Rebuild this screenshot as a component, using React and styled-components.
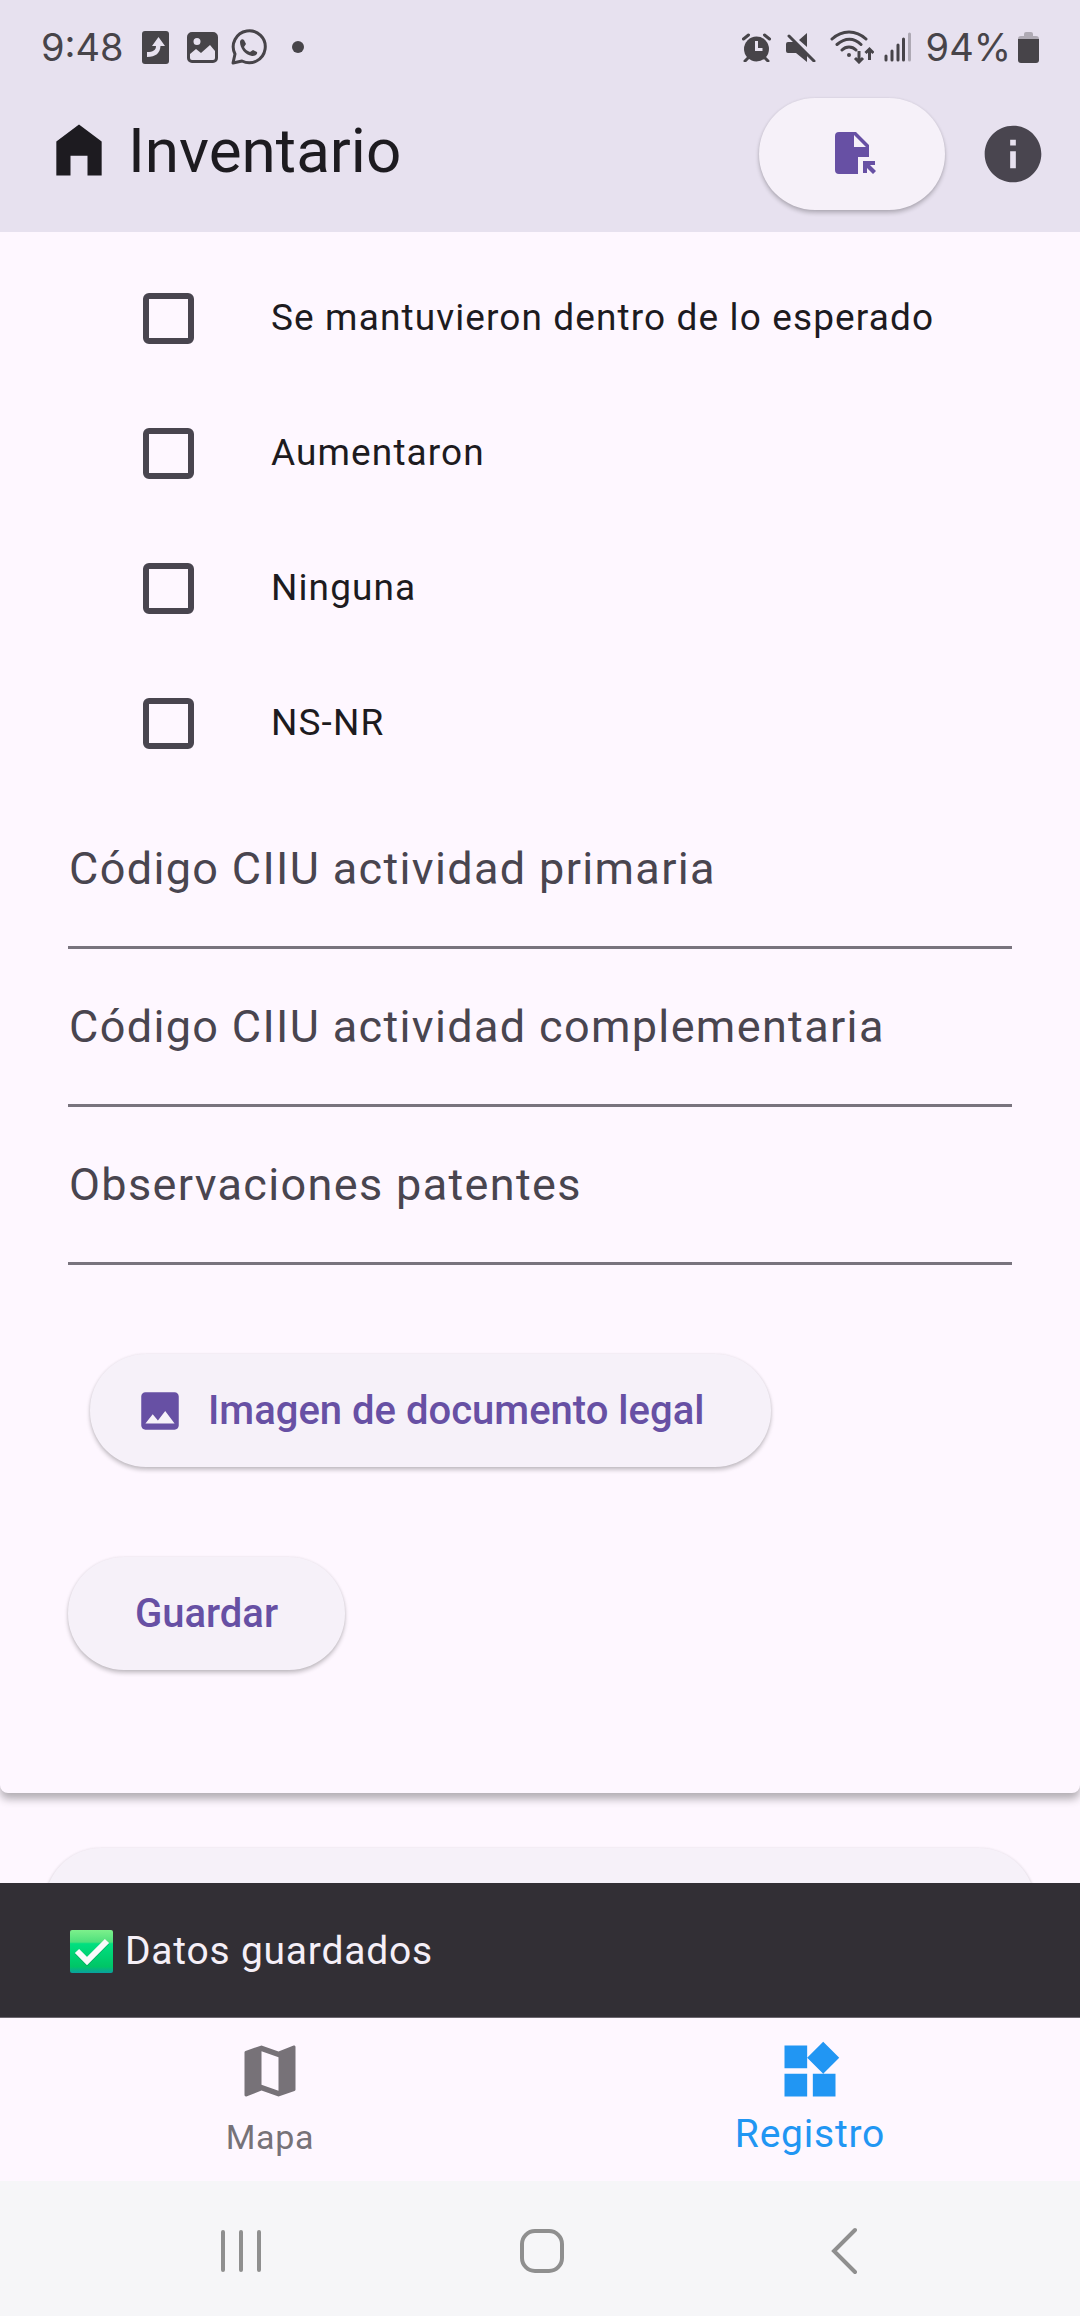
import React from "react";
import styled, { createGlobalStyle } from "styled-components";

const color = {
  surface: "#fef7ff",
  header: "#e7e1ef",
  raised: "#f6f1f9",
  primary: "#6750a4",
  ink: "#1d1b20",
  muted: "#49454f",
  outline: "#79747e",
  status: "#474449",
  snackbar: "#322f35",
  onSnackbar: "#f5eff7",
  idle: "#777278",
  active: "#2196f3",
  system: "#f6f6f8",
  systemIcon: "#8f8f8f",
};

const GlobalStyle = createGlobalStyle`
  *, *::before, *::after { box-sizing: border-box; }
  body {
    margin: 0;
    background: ${color.surface};
    color: ${color.ink};
    font-family: Roboto, "Noto Sans", sans-serif;
  }
  svg { display: block; flex: none; }
  button, input { font: inherit; color: inherit; }
`;

const Screen = styled.div`
  display: flex;
  flex-direction: column;
  height: 100vh;
  overflow: hidden;
`;

const Header = styled.header`
  background: ${color.header};
`;

const StatusBar = styled.div`
  display: flex;
  align-items: center;
  justify-content: space-between;
  height: 94px;
  padding: 0 41px;
  color: ${color.status};
  font-family: Inter, Roboto, sans-serif;
  font-size: 38px;
  line-height: 48px;
  font-weight: 400;
`;

const StatusGroup = styled.div`
  display: flex;
  align-items: center;
  gap: ${(p) => p.$gap}px;
`;

const AppBar = styled.div`
  display: flex;
  align-items: center;
  justify-content: space-between;
  padding: 4px 33px 22px 45px;
`;

const Brand = styled.div`
  display: flex;
  align-items: center;
  gap: 15px;
  padding-bottom: 8px;
`;

const Title = styled.h1`
  margin: 0;
  padding-top: 2px;
  font-size: 62px;
  line-height: 80px;
  font-weight: 400;
`;

const IconButton = styled.button`
  display: flex;
  padding: 0;
  border: 0;
  background: none;
  color: ${color.muted};
`;

const PillButton = styled.button`
  display: flex;
  align-items: center;
  justify-content: center;
  gap: 23px;
  height: ${(p) => p.$height || 113}px;
  padding: ${(p) => p.$padding || "0 67px"};
  border: 0;
  border-radius: 56px;
  background: ${color.raised};
  color: ${color.primary};
  font-size: 40px;
  line-height: 56px;
  font-weight: 500;
  box-shadow: 0 3px 4px rgba(0, 0, 0, 0.22), 0 0 3px rgba(0, 0, 0, 0.08);
`;

const Actions = styled.div`
  display: flex;
  align-items: center;
  gap: 34px;
`;

const Content = styled.main`
  flex: 1;
  min-height: 0;
  overflow: hidden;
`;

const Card = styled.form`
  display: flex;
  flex-direction: column;
  padding: 19px 68px 123px;
  border-radius: 0 0 8px 8px;
  background: ${color.surface};
  box-shadow: 0 6px 9px rgba(0, 0, 0, 0.3);
`;

const Options = styled.fieldset`
  margin: 0;
  padding: 0;
  border: 0;
`;

const Option = styled.label`
  display: flex;
  align-items: center;
  gap: 77px;
  height: 135px;
  padding-left: 75px;
  font-size: 37px;
  line-height: 52px;
  letter-spacing: 0.03em;
`;

const OptionText = styled.span`
  padding-bottom: 2px;
`;

const Checkbox = styled.input`
  appearance: none;
  flex: none;
  width: 51px;
  height: 51px;
  margin: 0;
  border: 6px solid ${color.muted};
  border-radius: 6px;
  &:checked { background: ${color.primary}; border-color: ${color.primary}; }
`;

const Field = styled.input`
  width: 100%;
  height: 158px;
  padding: 0 1px;
  border: 0;
  border-bottom: 3px solid ${color.outline};
  border-radius: 0;
  background: transparent;
  outline: none;
  font-size: 45px;
  line-height: 68px;
  letter-spacing: 0.03em;
  &::placeholder { color: ${color.muted}; opacity: 1; }
`;

const FormActions = styled.div`
  display: flex;
  flex-direction: column;
  align-items: flex-start;
  gap: 90px;
  padding-top: 89px;
`;

const Indent = styled.div`
  padding-left: 22px;
`;

const NextSection = styled.div`
  display: grid;
  padding: 55px 45px 0;
`;

const Snackbar = styled.div`
  display: flex;
  align-items: center;
  gap: 12px;
  height: 135px;
  padding: 2px 70px 0;
  border-bottom: 1px solid #6b666e;
  background: ${color.snackbar};
  color: ${color.onSnackbar};
  font-size: 39px;
  line-height: 56px;
  letter-spacing: 0.02em;
`;

const BottomNav = styled.nav`
  display: grid;
  grid-template-columns: 1fr 1fr;
  height: 163px;
`;

const NavItem = styled.a`
  display: flex;
  flex-direction: column;
  align-items: center;
  gap: 2px;
  padding-top: 19px;
  color: ${(p) => (p.$active ? color.active : color.idle)};
  font-size: ${(p) => (p.$active ? 39 : 34)}px;
  line-height: ${(p) => (p.$active ? 54 : 60)}px;
  letter-spacing: 0.02em;
  text-decoration: none;
`;

const SystemBar = styled.div`
  display: grid;
  grid-template-columns: 1fr 1fr 1fr;
  align-items: center;
  height: 135px;
  padding: 4px 86px 0 90px;
  background: ${color.system};
`;

const SystemButton = styled(IconButton)`
  justify-content: center;
  color: ${color.systemIcon};
`;

const Svg = ({ w, h = w, box, children }) => (
  <svg width={w} height={h} viewBox={box || `0 0 ${w} ${h}`} fill="currentColor" aria-hidden="true">
    {children}
  </svg>
);

const Material = ({ size, d }) => (
  <Svg w={size} box="0 0 24 24">
    <path d={d} />
  </Svg>
);

const paths = {
  home: "M4 21V9l8-6 8 6v12h-5v-7H9v7z",
  info: "M12 2C6.48 2 2 6.48 2 12s4.48 10 10 10 10-4.48 10-10S17.52 2 12 2zm1 15h-2v-6h2v6zm0-8h-2V7h2v2z",
  image:
    "M21 19V5c0-1.1-.9-2-2-2H5c-1.1 0-2 .9-2 2v14c0 1.1.9 2 2 2h14c1.1 0 2-.9 2-2zM8.5 13.5l2.5 3.01L14.5 12l4.5 6H5l3.5-4.5z",
  map: "M20.5 3l-.16.03L15 5.1 9 3 3.36 4.9c-.21.07-.36.25-.36.48V20.5c0 .28.22.5.5.5l.16-.03L9 18.9l6 2.1 5.64-1.9c.21-.07.36-.25.36-.48V3.5c0-.28-.22-.5-.5-.5zM15 19l-6-2.11V5l6 2.11V19z",
  widgets:
    "M13 13v8h8v-8h-8zM3 21h8v-8H3v8zM3 3v8h8V3H3zm13.66-1.31L11 7.34 16.66 13l5.66-5.66-5.66-5.65z",
};

const ShareIcon = () => (
  <Svg w={37} h={33} box="-5 0 37 33">
    <rect width="27" height="33" rx="3" />
    <path
      d="M5 21v5c9 0 13-4 13.500-11H23L16.500 6 10 15h4c0 4-3 6-9 6z"
      fill={color.header}
    />
  </Svg>
);

const GalleryIcon = () => (
  <Svg w={31}>
    <path
      fillRule="evenodd"
      d="M5 0h21a5 5 0 0 1 5 5v21a5 5 0 0 1-5 5H5a5 5 0 0 1-5-5V5a5 5 0 0 1 5-5zM10 6a3.500 3.500 0 1 0 0 7 3.500 3.500 0 0 0 0-7zM3 22v4a2 2 0 0 0 2 2h21a2 2 0 0 0 2-2v-7l-5-6-9 8-5-4z"
    />
  </Svg>
);

const ChatIcon = () => (
  <Svg w={36}>
    <path
      d="M4 25A16 16 0 1 1 11 32L2 34z"
      fill="none"
      stroke="currentColor"
      strokeWidth="3"
      strokeLinejoin="round"
    />
    <path d="M9 13c0-2 2-4 4-2l2 4-2 3c1 2 3 4 6 5l3-2 4 2c1 3-3 4-5 4C14 26 9 19 9 13z" />
  </Svg>
);

const DotIcon = () => (
  <Svg w={24} h={12}>
    <circle cx="18" cy="6" r="6" />
  </Svg>
);

const AlarmIcon = () => (
  <Svg w={34} h={29}>
    <circle cx="14.500" cy="16" r="12.500" />
    <path d="M1.500 6l5-4M27.500 6l-5-4M3 28l4-4M26 28l-4-4" stroke="currentColor" strokeWidth="3" strokeLinecap="round" />
    <path d="M14.500 8v8.500h6" fill="none" stroke={color.header} strokeWidth="3" />
  </Svg>
);

const MuteIcon = () => (
  <Svg w={34} h={29}>
    <path d="M13 7l8-7v14zM2 9h6l13 13v7L10 20H2a2 2 0 0 1-2-2v-7a2 2 0 0 1 2-2z" />
    <path d="M3 3l25 25" stroke="currentColor" strokeWidth="3" strokeLinecap="round" />
  </Svg>
);

const WifiIcon = () => (
  <Svg w={44} h={34}>
    <g fill="none" stroke="currentColor" strokeWidth="3" strokeLinecap="round">
      <path d="M2 9C12-.5 26-.5 36 9M7 14.500C15 7.500 24 7.500 31 14.500M12 20c4-4 10-4 14 0" />
    </g>
    <circle cx="19" cy="25" r="2" />
    <path d="M29 21v10M25 28l4 4 4-4M39.500 30V19M35.500 23l4-4 4 4" fill="none" stroke="currentColor" strokeWidth="3" />
  </Svg>
);

const SignalIcon = () => (
  <Svg w={32} h={30}>
    <g stroke="currentColor" strokeWidth="3" strokeLinecap="round">
      <path d="M2 24v4M8 19v9M14 13v15M19.500 7v21" />
      <path d="M25.500 2v26" opacity="0.35" />
    </g>
  </Svg>
);

const BatteryIcon = () => (
  <Svg w={21} h={31}>
    <path d="M6 2a2 2 0 0 1 2-2h5a2 2 0 0 1 2 2v2h3a3 3 0 0 1 3 3H0a3 3 0 0 1 3-3h3z" opacity="0.35" />
    <path d="M0 7h21v21a3 3 0 0 1-3 3H3a3 3 0 0 1-3-3z" />
  </Svg>
);

const FileImportIcon = () => (
  <Svg w={42} h={44}>
    <path fillRule="evenodd" d="M4 0h17l13 13v12H23v17H4a4 4 0 0 1-4-4V4a4 4 0 0 1 4-4zM19 3v12h12z" />
    <path d="M28 29h12v4h-5l6 6-3 3-6-6v5h-4z" />
  </Svg>
);

const CheckMark = () => (
  <Svg w={43}>
    <defs>
      <linearGradient id="check-tile" x1="0" y1="0" x2="0" y2="1">
        <stop offset="0" stopColor="#7df08c" />
        <stop offset="0.28" stopColor="#4fe07c" />
        <stop offset="0.32" stopColor="#00e080" />
        <stop offset="0.85" stopColor="#00c566" />
        <stop offset="1" stopColor="#0aa0a0" />
      </linearGradient>
    </defs>
    <rect width="43" height="43" rx="2" fill="url(#check-tile)" />
    <path d="M7 22l10 10 20-20" fill="none" stroke="#078a4c" strokeOpacity="0.5" strokeWidth="6" />
    <path d="M7 21l10 10 20-20" fill="none" stroke="#fafafa" strokeWidth="6" />
  </Svg>
);

const RecentsIcon = () => (
  <Svg w={42} h={46}>
    <path d="M3 4v38M21 4v38M39 4v38" stroke="currentColor" strokeWidth="4" strokeLinecap="round" />
  </Svg>
);

const SystemHomeIcon = () => (
  <Svg w={46}>
    <rect x="3" y="3" width="40" height="40" rx="13" fill="none" stroke="currentColor" strokeWidth="4" />
  </Svg>
);

const BackIcon = () => (
  <Svg w={28} h={48}>
    <path d="M26 3L5 24l21 21" fill="none" stroke="currentColor" strokeWidth="4" strokeLinecap="round" />
  </Svg>
);

const options = ["Se mantuvieron dentro de lo esperado", "Aumentaron", "Ninguna", "NS-NR"];
const fields = [
  "Código CIIU actividad primaria",
  "Código CIIU actividad complementaria",
  "Observaciones patentes",
];

export default function App() {
  return (
    <Screen>
      <GlobalStyle />
      <Header>
        <StatusBar>
          <StatusGroup $gap={13}>
            <span>9:48</span>
            <ShareIcon />
            <GalleryIcon />
            <ChatIcon />
            <DotIcon />
          </StatusGroup>
          <StatusGroup $gap={10}>
            <AlarmIcon />
            <MuteIcon />
            <WifiIcon />
            <SignalIcon />
            <StatusGroup $gap={7}>
              <span>94%</span>
              <BatteryIcon />
            </StatusGroup>
          </StatusGroup>
        </StatusBar>
        <AppBar>
          <Brand>
            <Material size={68} d={paths.home} />
            <Title>Inventario</Title>
          </Brand>
          <Actions>
            <PillButton type="button" $height={112} $padding="0 68px 0 76px" aria-label="Importar archivo">
              <FileImportIcon />
            </PillButton>
            <IconButton type="button" aria-label="Información">
              <Material size={68} d={paths.info} />
            </IconButton>
          </Actions>
        </AppBar>
      </Header>
      <Content>
        <Card onSubmit={(e) => e.preventDefault()}>
          <Options>
            {options.map((label) => (
              <Option key={label}>
                <Checkbox type="checkbox" />
                <OptionText>{label}</OptionText>
              </Option>
            ))}
          </Options>
          {fields.map((label) => (
            <Field key={label} type="text" placeholder={label} aria-label={label} />
          ))}
          <FormActions>
            <Indent>
              <PillButton type="button" $padding="0 67px 0 45px">
                <Material size={50} d={paths.image} />
                Imagen de documento legal
              </PillButton>
            </Indent>
            <PillButton type="submit">Guardar</PillButton>
          </FormActions>
        </Card>
        <NextSection>
          <PillButton type="button" aria-label="Siguiente sección" />
        </NextSection>
      </Content>
      <Snackbar role="status">
        <CheckMark />
        Datos guardados
      </Snackbar>
      <BottomNav>
        <NavItem href="#mapa">
          <Material size={68} d={paths.map} />
          Mapa
        </NavItem>
        <NavItem href="#registro" $active>
          <Material size={68} d={paths.widgets} />
          Registro
        </NavItem>
      </BottomNav>
      <SystemBar>
        <SystemButton type="button" aria-label="Recientes"><RecentsIcon /></SystemButton>
        <SystemButton type="button" aria-label="Inicio"><SystemHomeIcon /></SystemButton>
        <SystemButton type="button" aria-label="Atrás"><BackIcon /></SystemButton>
      </SystemBar>
    </Screen>
  );
}
